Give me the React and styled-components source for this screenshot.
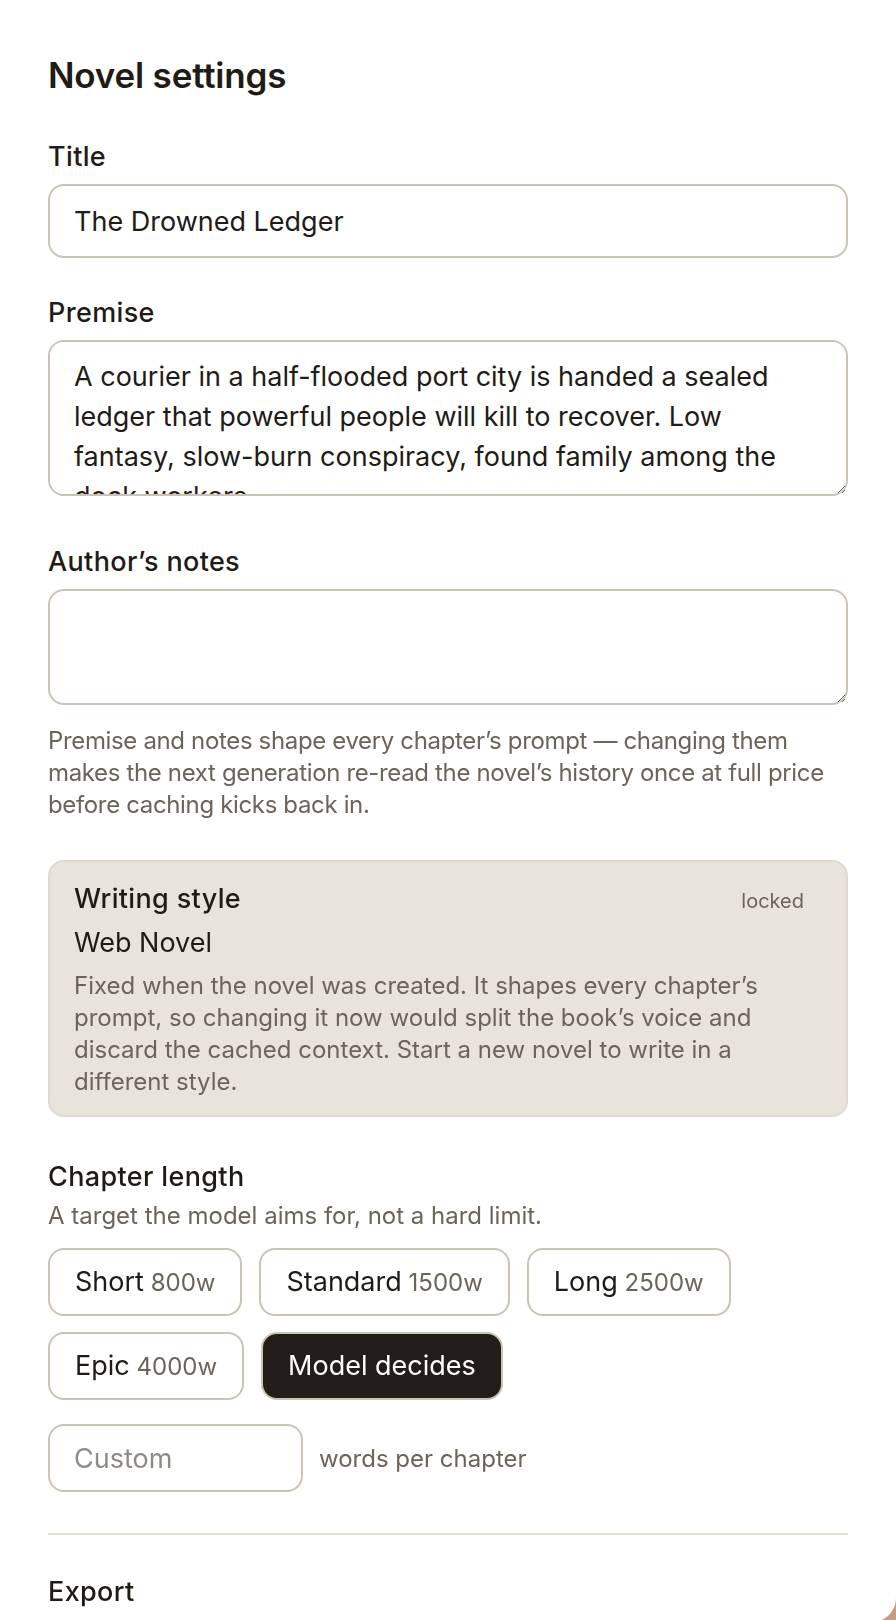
import styled, { createGlobalStyle } from 'styled-components';

const lengths = [
  { key: 'short', label: 'Short', words: '800w' },
  { key: 'standard', label: 'Standard', words: '1500w' },
  { key: 'long', label: 'Long', words: '2500w' },
  { key: 'epic', label: 'Epic', words: '4000w' },
  { key: 'model', label: 'Model decides' },
];

const premise =
  'A courier in a half-flooded port city is handed a sealed ledger that powerful people will kill to recover. Low fantasy, slow-burn conspiracy, found family among the dock workers.';

const App = () => {
  const selected = 'model';
  return (
    <>
      <GlobalStyle />
      <Panel>
        <Heading>Novel settings</Heading>

        <Field>
          <Label htmlFor="title">Title</Label>
          <Input id="title" defaultValue="The Drowned Ledger" />
        </Field>

        <Field $gap={48}>
          <Label htmlFor="premise">Premise</Label>
          <TextArea id="premise" $height={156} defaultValue={premise} />
        </Field>

        <Field $gap={20}>
          <Label htmlFor="notes">Author’s notes</Label>
          <TextArea id="notes" $height={116} defaultValue="" />
        </Field>

        <Hint>
          Premise and notes shape every chapter’s prompt — changing them makes the next generation
          re-read the novel’s history once at full price before caching kicks back in.
        </Hint>

        <StyleCard>
          <CardHead>
            <CardTitle>Writing style</CardTitle>
            <Locked>locked</Locked>
          </CardHead>
          <StyleName>Web Novel</StyleName>
          <CardText>
            Fixed when the novel was created. It shapes every chapter’s prompt, so changing it now
            would split the book’s voice and discard the cached context. Start a new novel to write
            in a different style.
          </CardText>
        </StyleCard>

        <SectionTitle>Chapter length</SectionTitle>
        <SubText>A target the model aims for, not a hard limit.</SubText>

        <Chips>
          {lengths.map((item) => (
            <Chip key={item.key} type="button" $active={item.key === selected}>
              {item.label}
              {item.words && <Words> {item.words}</Words>}
            </Chip>
          ))}
        </Chips>

        <CustomRow>
          <CustomInput placeholder="Custom" />
          <Unit>words per chapter</Unit>
        </CustomRow>

        <Divider />

        <SectionTitle>Export</SectionTitle>
      </Panel>
    </>
  );
};

const GlobalStyle = createGlobalStyle`
  html, body {
    margin: 0;
    padding: 0;
    background: #c69a86;
    overflow: hidden;
  }

  body {
    font-family: Inter, "Noto Sans", sans-serif;
    color: #1f1b16;
    -webkit-font-smoothing: antialiased;
  }

  * {
    box-sizing: border-box;
  }
`;

const Panel = styled.main`
  width: 100%;
  height: 1622px;
  background: #fff;
  padding: 55px 48px 0;
  border-bottom-right-radius: 24px;
  overflow: hidden;
`;

const Heading = styled.h2`
  margin: 0 0 44px;
  font-size: 35px;
  line-height: 40px;
  font-weight: 600;
  letter-spacing: -0.2px;
`;

const Field = styled.div`
  display: flex;
  flex-direction: column;
  gap: 11px;
  margin-bottom: ${(p) => p.$gap ?? 37}px;
`;

const Label = styled.label`
  padding-top: 2px;
  font-size: 27px;
  line-height: 32px;
  font-weight: 500;
  letter-spacing: 0.35px;
`;

const controlBase = `
  width: 100%;
  border: 2px solid #cbc3b3;
  border-radius: 16px;
  background: #fff;
  color: #1f1b16;
  font-family: Inter, "Noto Sans", sans-serif;
  font-size: 27px;
  line-height: 40px;
  padding: 15px 24px;
  outline: none;
`;

const Input = styled.input`
  ${controlBase}
  height: 74px;
`;

const TextArea = styled.textarea`
  ${controlBase}
  display: block;
  height: ${(p) => p.$height}px;
  resize: vertical;
  scrollbar-width: none;
`;

const Hint = styled.p`
  margin: 0 0 39px;
  font-size: 24px;
  line-height: 32px;
  letter-spacing: -0.35px;
  color: #6b645a;
`;

const StyleCard = styled.section`
  background: #e9e4db;
  border: 2px solid #e0dacd;
  border-radius: 16px;
  padding: 21px 24px 17px;
  margin-bottom: 44px;
`;

const CardHead = styled.div`
  display: flex;
  justify-content: space-between;
  align-items: baseline;
  margin-bottom: 12px;
`;

const CardTitle = styled.h3`
  margin: 0;
  font-size: 27px;
  line-height: 32px;
  font-weight: 500;
  letter-spacing: 0.35px;
`;

const Locked = styled.span`
  font-size: 20px;
  color: #6b645a;
  margin-right: 18px;
`;

const StyleName = styled.div`
  font-size: 27px;
  line-height: 32px;
  margin-bottom: 11px;
`;

const CardText = styled.p`
  margin: 0;
  font-size: 24px;
  line-height: 32px;
  color: #6b645a;
`;

const SectionTitle = styled.h3`
  margin: 0;
  font-size: 27px;
  line-height: 32px;
  font-weight: 500;
  letter-spacing: 0.35px;
`;

const SubText = styled.p`
  margin: 7px 0 16px;
  font-size: 24px;
  line-height: 32px;
  color: #6b645a;
`;

const Chips = styled.div`
  display: flex;
  flex-wrap: wrap;
  gap: 16px 17px;
  margin-bottom: 24px;
`;

const Chip = styled.button`
  height: 68px;
  padding: 0 25px;
  border-radius: 16px;
  border: 2px solid #cbc3b3;
  background: ${(p) => (p.$active ? '#221d19' : '#fff')};
  color: ${(p) => (p.$active ? '#fff' : '#1f1b16')};
  font-family: Inter, "Noto Sans", sans-serif;
  font-size: 27px;
  line-height: 32px;
  white-space: pre;
  cursor: pointer;
`;

const Words = styled.span`
  font-size: 24px;
  color: #6b645a;
`;

const CustomRow = styled.div`
  display: flex;
  align-items: center;
  gap: 16px;
  margin-bottom: 41px;
`;

const CustomInput = styled.input`
  ${controlBase}
  width: 255px;
  height: 68px;

  &::placeholder {
    color: #8f8a83;
  }
`;

const Unit = styled.span`
  font-size: 24px;
  color: #6b645a;
`;

const Divider = styled.hr`
  margin: 0 0 41px;
  border: 0;
  height: 2px;
  background: #e3ded2;
`;

export default App;
